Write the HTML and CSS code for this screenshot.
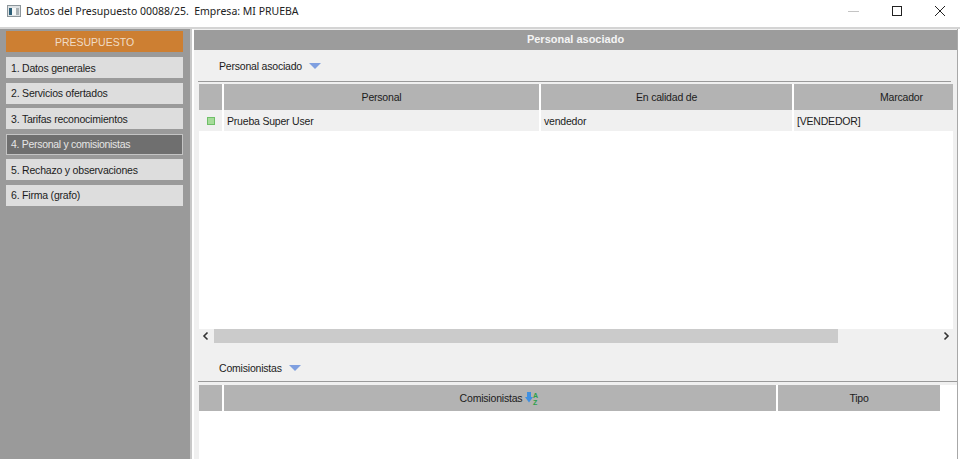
FILE: index.html
```html
<!DOCTYPE html>
<html lang="es">
<head>
    <meta charset="UTF-8">
    <meta name="viewport" content="width=device-width, initial-scale=1.0">
    <title>Datos del Presupuesto</title>
    <link rel="stylesheet" href="styles.css">
</head>
<body>

<header class="titlebar">
    <svg class="app-icon" width="16" height="16" viewBox="0 0 16 16">
        <rect x="1.5" y="2.5" width="13" height="11" fill="#dfe3e5" stroke="#8d969b"/>
        <rect x="3" y="5" width="3" height="7" fill="#2c5f78"/>
        <rect x="6" y="5" width="4" height="7" fill="#f6f8f8"/>
        <rect x="10" y="5" width="3" height="7" fill="#a9b1b5"/>
    </svg>
    <span class="window-title">Datos del Presupuesto 00088/25.&nbsp; Empresa: MI PRUEBA</span>
    <div class="window-controls">
        <svg width="14" height="14" viewBox="0 0 14 14"><path d="M1 7.5h11" stroke="#c4c4c4" fill="none"/></svg>
        <svg width="14" height="14" viewBox="0 0 14 14"><rect x="2.5" y="2.5" width="9" height="9" stroke="#222" fill="none"/></svg>
        <svg width="14" height="14" viewBox="0 0 14 14"><path d="M2 2l10 10M12 2L2 12" stroke="#222" fill="none"/></svg>
    </div>
</header>

<div class="window-body">
    <nav class="sidebar">
        <div class="side-title">PRESUPUESTO</div>
        <div class="side-item">1. Datos generales</div>
        <div class="side-item">2. Servicios ofertados</div>
        <div class="side-item">3. Tarifas reconocimientos</div>
        <div class="side-item active">4. Personal y comisionistas</div>
        <div class="side-item">5. Rechazo y observaciones</div>
        <div class="side-item">6. Firma (grafo)</div>
    </nav>

    <main class="panel">
        <h2 class="panel-title">Personal asociado</h2>

        <div class="section-label section-first">
            <span>Personal asociado</span>
            <span class="arrow"></span>
        </div>
        <div class="rule rule-short"></div>
        <div class="grid-area">
            <div class="grid-row grid-head cols-personal">
                <div></div>
                <div>Personal</div>
                <div>En calidad de</div>
                <div class="clipped-head"><span>Marcador</span></div>
            </div>
            <div class="grid-row grid-data cols-personal">
                <div class="marker-cell"><span class="marker"></span></div>
                <div>Prueba Super User</div>
                <div>vendedor</div>
                <div>[VENDEDOR]</div>
            </div>
            <div class="grid-empty"></div>
        </div>
        <div class="scrollbar">
            <svg width="16" height="14" viewBox="0 0 16 14"><path d="M9.5 3.5L6 7l3.5 3.5" stroke="#333" stroke-width="1.6" fill="none"/></svg>
            <div class="scroll-track"><div class="scroll-thumb"></div></div>
            <svg width="16" height="14" viewBox="0 0 16 14"><path d="M6.5 3.5L10 7l-3.5 3.5" stroke="#333" stroke-width="1.6" fill="none"/></svg>
        </div>

        <div class="section-label section-second">
            <span>Comisionistas</span>
            <span class="arrow"></span>
        </div>
        <div class="rule"></div>
        <div class="grid-area grid-bottom">
            <div class="grid-row grid-head cols-comis">
                <div></div>
                <div>Comisionistas
                    <svg class="sort-icon" width="15" height="15" viewBox="0 0 15 15">
                        <path d="M2 1h4v5h2L4 11.5 0 6h2z" fill="#3f8fe0"/>
                        <text x="8" y="6.5" class="sort-letter">A</text>
                        <text x="8" y="14" class="sort-letter">Z</text>
                    </svg>
                </div>
                <div>Tipo</div>
            </div>
        </div>
    </main>
</div>

</body>
</html>
```

FILE: styles.css
```css
* {
    box-sizing: border-box;
}
html, body {
    height: 100%;
}
body {
    margin: 0;
    overflow: hidden;
    background: #ffffff;
    color: #1c1c1c;
    font-family: "Liberation Sans", Arial, sans-serif;
    font-size: 10.5px;
    letter-spacing: -0.2px;
}
.titlebar {
    display: flex;
    align-items: center;
    height: 27px;
    padding: 0 13px 5px 6px;
    background: #ffffff;
}
.app-icon {
    margin-right: 4px;
}
.window-title {
    font-family: "Noto Sans", sans-serif;
    font-size: 10.5px;
    letter-spacing: 0;
    color: #222;
}
.window-controls {
    display: flex;
    gap: 29px;
    margin-left: auto;
}
.window-body {
    display: flex;
    height: 432px;
    border-top: 2px solid #d4d4d4;
}
.sidebar {
    display: flex;
    flex-direction: column;
    width: 192px;
    padding: 2px 7px 0 6px;
    background: #9a9a9a;
    border-right: 2px solid #c8c8c8;
}
.side-title {
    display: flex;
    align-items: center;
    justify-content: center;
    height: 21px;
    margin-bottom: 5px;
    background: #cd7f32;
    color: #f0dcc6;
    font-size: 10.5px;
    letter-spacing: 0;
}
.side-item {
    display: flex;
    align-items: center;
    height: 21px;
    margin-bottom: 4.6px;
    padding-left: 5px;
    background: #dddddd;
    white-space: nowrap;
}
.side-item.active {
    background: #6f6f6f;
    border: 1px solid #c4c4c4;
    padding-left: 4px;
    color: #e6e6e6;
    letter-spacing: -0.3px;
}
.panel {
    flex: 1;
    margin: 0 2px 0 2px;
    padding-top: 1px;
    background: #f0f0f0;
    border-right: 1px solid #a8a8a8;
    display: flex;
    flex-direction: column;
    min-width: 0;
}
.panel-title {
    height: 20px;
    margin: 0;
    background: #9c9c9c;
    color: #f4f4f4;
    font-size: 11px;
    font-weight: bold;
    letter-spacing: 0;
    line-height: 18px;
    text-align: center;
}
.section-label {
    display: flex;
    align-items: center;
    gap: 7px;
    padding-left: 25px;
    height: 16px;
}
.section-first {
    margin-top: 8px;
    margin-bottom: 7px;
}
.section-second {
    margin-top: 17px;
    margin-bottom: 5px;
}
.arrow {
    width: 0;
    height: 0;
    border-left: 6px solid transparent;
    border-right: 6px solid transparent;
    border-top: 6px solid #7f9fe0;
}
.rule {
    height: 1px;
    margin-left: 4px;
    background: #9a9a9a;
}
.rule-short {
    margin-right: 6px;
}
.grid-area {
    display: flex;
    flex-direction: column;
    height: 245px;
    margin: 2px 4px 0 5px;
    background: #ffffff;
}
.grid-bottom {
    flex: 1;
    height: auto;
    margin: 3px 0 0 5px;
}
.grid-row {
    display: grid;
    column-gap: 2px;
}
.cols-personal {
    grid-template-columns: 23px 315px 251px 159px;
}
.cols-comis {
    grid-template-columns: 23px 552px 162px;
}
.grid-head {
    height: 26px;
}
.grid-head > div {
    display: flex;
    align-items: center;
    justify-content: center;
    background: #b3b3b3;
}
.grid-head > .clipped-head {
    justify-content: flex-start;
    padding-left: 86px;
}
.grid-data {
    height: 21px;
}
.grid-data > div {
    display: flex;
    align-items: center;
    padding-left: 3px;
    background: #f0f0f0;
}
.grid-data > .marker-cell {
    justify-content: center;
    padding-left: 0;
}
.marker {
    width: 8px;
    height: 8px;
    background: #a6dc9a;
    border: 1px solid #6fbf68;
}
.grid-empty {
    flex: 1;
}
.scrollbar {
    display: flex;
    align-items: center;
    height: 14px;
    margin: 0 3px 0 4px;
}
.scroll-track {
    flex: 1;
    height: 100%;
}
.scroll-thumb {
    width: 624px;
    height: 100%;
    background: #cbcbcb;
}
.sort-icon {
    margin-left: 3px;
}
.sort-letter {
    font-size: 7px;
    font-weight: bold;
    fill: #2ca04a;
}
```
